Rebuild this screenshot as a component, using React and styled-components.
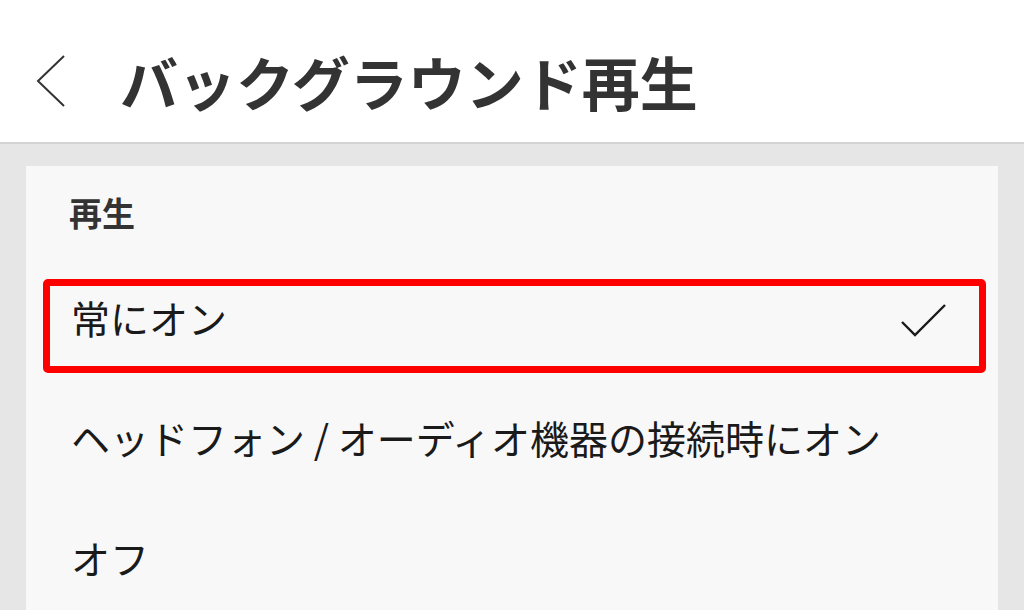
import React from 'react';
import styled, { createGlobalStyle } from 'styled-components';

const options = [
  { label: '常にオン', selected: true },
  { label: 'ヘッドフォン / オーディオ機器の接続時にオン' },
  { label: 'オフ' },
];

const GlobalStyle = createGlobalStyle`
  html, body {
    margin: 0;
    padding: 0;
    height: 610px;
    overflow: hidden;
    background: #e6e6e6;
  }
  body {
    font-family: "Noto Sans CJK JP", "Noto Sans", sans-serif;
  }
`;

const Page = styled.div`
  display: flex;
  flex-direction: column;
  width: 1024px;
  height: 610px;
`;

const Header = styled.header`
  display: flex;
  align-items: center;
  height: 144px;
  padding: 20px 0 0 36px;
  box-sizing: border-box;
  background: #ffffff;
  border-bottom: 2px solid #d3d3d3;
  flex-shrink: 0;
`;

const BackButton = styled.button`
  display: flex;
  align-items: center;
  padding: 0;
  border: none;
  background: none;
  cursor: pointer;
`;

const Title = styled.h1`
  margin: 0 0 0 52px;
  font-size: 58px;
  font-weight: 700;
  color: #333333;
  line-height: 1;
`;

const Main = styled.main`
  flex: 1;
  padding: 22px 26px 0 26px;
  background: #e6e6e6;
  display: flex;
`;

const Card = styled.section`
  flex: 1;
  background: #f8f8f8;
`;

const SectionLabel = styled.div`
  display: flex;
  align-items: center;
  height: 91px;
  padding-left: 43px;
  font-size: 33px;
  font-weight: 700;
  color: #333333;
`;

const OptionRow = styled.div`
  position: relative;
  display: flex;
  align-items: center;
  justify-content: space-between;
  height: 120px;
  padding: 0 51px 0 45px;
  font-size: 39px;
  color: #1a1a1a;
  cursor: pointer;

  ${({ $highlight }) =>
    $highlight &&
    `
    &::after {
      content: '';
      position: absolute;
      top: 22px;
      bottom: 4px;
      left: 17px;
      right: 12px;
      border: 7px solid #ff0000;
      border-radius: 5px;
      pointer-events: none;
    }
  `}
`;

const Chevron = () => (
  <svg width="32" height="54" viewBox="0 0 32 54">
    <polyline points="28,2 2,27 28,52" fill="none" stroke="#333" strokeWidth="2" />
  </svg>
);

const Check = () => (
  <svg width="46" height="36" viewBox="0 0 46 36" style={{ marginTop: 8 }}>
    <polyline points="1,19 14,32 44,2" fill="none" stroke="#1a1a1a" strokeWidth="2.4" />
  </svg>
);

export default function App() {
  return (
    <Page>
      <GlobalStyle />
      <Header>
        <BackButton aria-label="戻る">
          <Chevron />
        </BackButton>
        <Title>バックグラウンド再生</Title>
      </Header>
      <Main>
        <Card>
          <SectionLabel>再生</SectionLabel>
          {options.map((opt) => (
            <OptionRow key={opt.label} $highlight={opt.selected}>
              <span>{opt.label}</span>
              {opt.selected && <Check />}
            </OptionRow>
          ))}
        </Card>
      </Main>
    </Page>
  );
}
